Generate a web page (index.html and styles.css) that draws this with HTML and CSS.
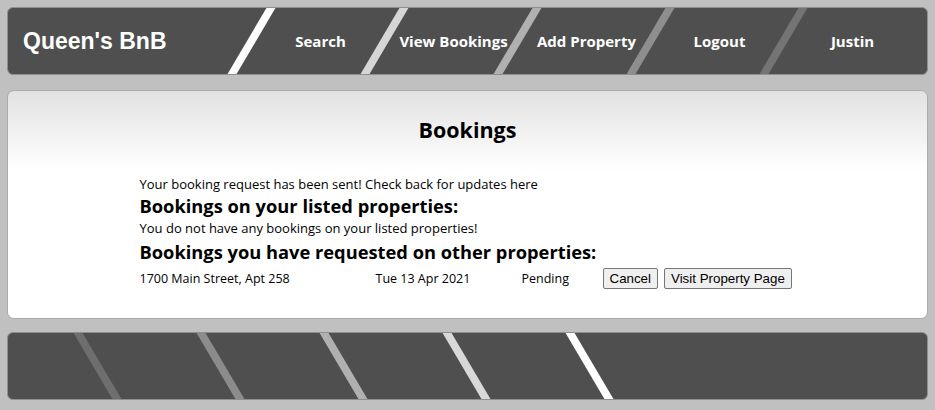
FILE: index.html
```html
<!DOCTYPE html>
<html lang="en">
<head>
<meta charset="utf-8">
<title>Queen's BnB - Bookings</title>
<link rel="stylesheet" href="styles.css">
</head>
<body>
<header class="topbar">
  <div class="logo">Queen's BnB</div>
  <nav class="nav">
    <a class="nav-item s1" href="#">Search</a>
    <a class="nav-item s2" href="#">View Bookings</a>
    <a class="nav-item s3" href="#">Add Property</a>
    <a class="nav-item s4" href="#">Logout</a>
    <a class="nav-item s5" href="#">Justin</a>
  </nav>
</header>

<main class="card">
  <h1 class="title">Bookings</h1>
  <section class="content">
    <p class="note">Your booking request has been sent! Check back for updates here</p>
    <h2 class="sub sub-a">Bookings on your listed properties:</h2>
    <p class="note">You do not have any bookings on your listed properties!</p>
    <h2 class="sub sub-b">Bookings you have requested on other properties:</h2>
    <div class="booking-row">
      <span class="cell">1700 Main Street, Apt 258</span>
      <span class="cell">Tue 13 Apr 2021</span>
      <span class="cell">Pending</span>
      <span class="actions">
        <button class="btn" type="button">Cancel</button>
        <button class="btn" type="button">Visit Property Page</button>
      </span>
    </div>
  </section>
</main>

<footer class="bottombar">
  <span class="deco f1"></span>
  <span class="deco f2"></span>
  <span class="deco f3"></span>
  <span class="deco f4"></span>
  <span class="deco f5"></span>
</footer>
</body>
</html>
```

FILE: styles.css
```css
* { box-sizing: border-box; }

body {
  margin: 0;
  padding: 7px;
  background: #c0c0c0;
  font-family: "Open Sans", "Noto Sans", sans-serif;
  color: #000;
}

.topbar {
  height: 68px;
  display: flex;
  align-items: stretch;
  background: #4f4f4f;
  border: 1px solid #8f8f8f;
  border-radius: 6px;
  overflow: hidden;
}

.logo {
  width: 244px;
  flex: none;
  display: flex;
  align-items: center;
  padding-left: 15px;
  font-family: "Liberation Sans", Arial, sans-serif;
  font-weight: bold;
  font-size: 23px;
  color: #fff;
}

.nav {
  display: flex;
  align-items: stretch;
}

.nav-item {
  position: relative;
  width: 133px;
  display: flex;
  align-items: center;
  justify-content: center;
  padding-left: 4px;
  color: #fff;
  text-decoration: none;
  font-family: "Open Sans", sans-serif;
  font-weight: bold;
  font-size: 15px;
}

.nav-item::before,
.deco::before {
  content: "";
  position: absolute;
  top: -2px;
  bottom: -2px;
  left: -5px;
  width: 9px;
}

.nav-item::before { transform: skewX(-30.5deg); }
.s1::before { background: #ffffff; }
.s2::before { background: #d6d6d6; }
.s3::before { background: #b0b0b0; }
.s4::before { background: #8e8e8e; }
.s5::before { background: #747474; }

.card {
  margin-top: 15px;
  height: 229px;
  background: linear-gradient(to bottom, #e2e2e2 0px, #ffffff 80px, #ffffff 100%);
  border: 1px solid #acacac;
  border-radius: 7px;
  padding-top: 24px;
}

.title {
  margin: 0;
  text-align: center;
  font-size: 21.5px;
  line-height: 30px;
  font-weight: bold;
}

.content {
  width: 656px;
  margin: 31px auto 0;
}

.note {
  margin: 0;
  font-size: 13px;
  line-height: 16px;
}

.sub {
  margin: 0;
  font-size: 18.3px;
  font-weight: bold;
}
.sub-a { line-height: 28px; }
.sub-b { line-height: 32px; }

.booking-row {
  display: grid;
  grid-template-columns: 236px 146px 81px max-content;
  align-items: center;
  font-size: 12.5px;
}

.actions {
  display: flex;
  gap: 6px;
  white-space: nowrap;
}

.btn {
  flex: none;
  white-space: nowrap;
  font-family: "Liberation Sans", Arial, sans-serif;
  font-size: 13.333px;
  line-height: 17px;
  padding: 1px 6px;
  background: #efefef;
  color: #000;
  border: 1px solid #767676;
  border-radius: 2px;
}

.bottombar {
  margin-top: 13px;
  height: 68px;
  display: flex;
  align-items: stretch;
  padding-left: 90px;
  background: #4f4f4f;
  border: 1px solid #8f8f8f;
  border-radius: 6px;
  overflow: hidden;
}

.deco {
  position: relative;
  width: 123px;
  flex: none;
}
.deco::before { transform: skewX(30.5deg); }
.f1::before { background: #6e6e6e; }
.f2::before { background: #8c8c8c; }
.f3::before { background: #b0b0b0; }
.f4::before { background: #d8d8d8; }
.f5::before { background: #ffffff; }
```
